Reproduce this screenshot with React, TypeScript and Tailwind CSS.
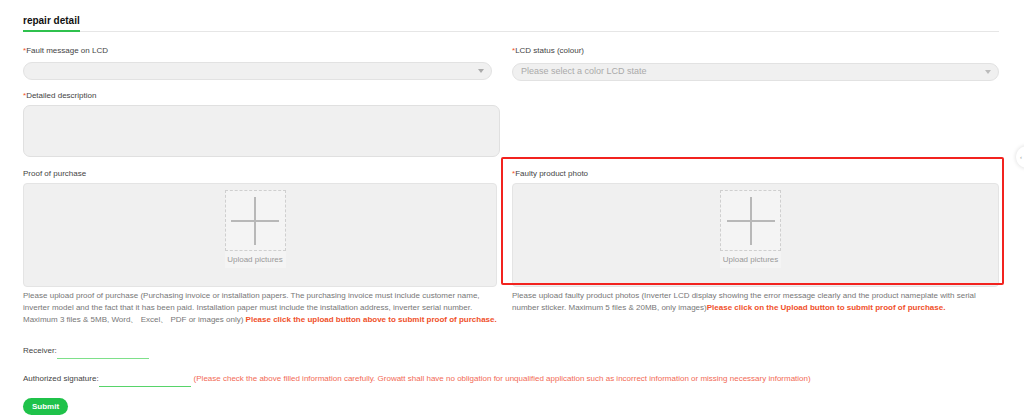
import React from 'react';

const Label: React.FC<{ text: string; required?: boolean }> = ({ text, required }) => (
  <div className="h-[12px] text-[8px] leading-[12px] text-[#444]">
    {required && <span className="text-[#f0502a]">*</span>}
    {text}
  </div>
);

const Upload: React.FC = () => (
  <div className="mt-[3px] h-[104px] rounded-[4px] border border-[#e4e4e4] bg-[#f0f0f0] flex justify-center pt-[6px] pr-[10px]">
    <div className="flex flex-col items-center">
      <div className="w-[61px] h-[61px] border border-dashed border-[#cfcfcf] bg-[#f4f4f4] flex items-center justify-center">
        <svg width="48" height="48" viewBox="0 0 48 48">
          <path d="M24 0v48M0 24h48" stroke="#b8b8b8" strokeWidth="2" />
        </svg>
      </div>
      <div className="w-[61px] text-center bg-[#f4f4f4] text-[8px] leading-[17px] text-[#999]">Upload pictures</div>
    </div>
  </div>
);

const App: React.FC = () => {
  return (
    <div
      className="relative w-[1024px] h-[417px] overflow-hidden bg-white"
      style={{ fontFamily: '"Liberation Sans", Arial, sans-serif' }}
    >
      <div className="pl-[23px] pr-[25px]">
        {/* Tabs */}
        <div className="pt-[14px] flex border-b border-[#e6e6e6]">
          <div className="border-b-2 border-[#2fc14d] pb-[2px] -mb-[1px] text-[10px] leading-[14px] font-bold text-[#111]">
            repair detail
          </div>
        </div>

        {/* Grid */}
        <div className="grid grid-cols-[477px_487px] gap-x-[12px] mt-[13px]">
          {/* row 1 */}
          <div>
            <Label text="Fault message on LCD" required />
            <div className="mt-[5px] h-[18px] rounded-full border border-[#e2e2e2] bg-[#f0f0f0] flex items-center justify-end pr-[7px] mr-[8px]">
              <span className="w-0 h-0 border-l-[3px] border-r-[3px] border-t-[4px] border-l-transparent border-r-transparent border-t-[#aaa]" />
            </div>
          </div>
          <div>
            <Label text="LCD status (colour)" required />
            <div className="mt-[6px] h-[18px] rounded-full border border-[#e2e2e2] bg-[#f0f0f0] flex items-center justify-between pl-[8px] pr-[7px]">
              <span className="text-[9px] text-[#aaa]">Please select a color LCD state</span>
              <span className="w-0 h-0 border-l-[3px] border-r-[3px] border-t-[4px] border-l-transparent border-r-transparent border-t-[#bbb]" />
            </div>
          </div>

          {/* row 2 */}
          <div className="mt-[9px]">
            <Label text="Detailed description" required />
            <div className="mt-[3px] h-[52px] rounded-[7px] border border-[#e0e0e0] bg-[#f0f0f0]" />
          </div>
          <div />

          {/* row 3 */}
          <div className="mt-[11px] pr-[3px]">
            <Label text="Proof of purchase" />
            <Upload />
          </div>
          <div className="relative mt-[11px]">
            <div className="absolute left-[-11px] right-[-5px] top-[-11px] bottom-[2px] border-2 border-[#f2231f] rounded-[2px] pointer-events-none" />
            <Label text="Faulty product photo" required />
            <Upload />
          </div>

          {/* row 4 */}
          <div className="mt-[3px] text-[8px] leading-[12px] text-[#777]">
            Please upload proof of purchase (Purchasing invoice or installation papers. The purchasing invoice must include customer name, inverter model and the fact that it has been paid. Installation paper must include the installation address, inverter serial number. Maximum 3 files &amp; 5MB, Word、 Excel、 PDF or images only){' '}
            <span className="font-bold text-[#f0502a]">Please click the upload button above to submit proof of purchase.</span>
          </div>
          <div className="mt-[3px] text-[8px] leading-[12px] text-[#777]">
            Please upload faulty product photos (Inverter LCD display showing the error message clearly and the product nameplate with serial number sticker. Maximum 5 files &amp; 20MB, only images)
            <span className="font-bold text-[#f0502a]">Please click on the Upload button to submit proof of purchase.</span>
          </div>
        </div>

        {/* signature */}
        <div className="mt-[19px] h-[12px] flex items-start text-[8px] leading-[12px] text-[#444]">
          <span>Receiver:</span>
          <span className="inline-block w-[92px] h-[14px] border-b border-[#7ee08a]" />
        </div>
        <div className="mt-[16px] h-[12px] flex items-start text-[8px] leading-[12px] text-[#444]">
          <span>Authorized signature:</span>
          <span className="inline-block w-[92px] h-[14px] border-b border-[#57d46a] mr-[3px]" />
          <span className="text-[#f26a55]">
            (Please check the above filled information carefully. Growatt shall have no obligation for unqualified application such as incorrect information or missing necessary information)
          </span>
        </div>
        <button className="mt-[13px] w-[45px] h-[17px] rounded-full bg-[#1fc24a] text-white text-[8px] font-bold flex items-center justify-center">
          Submit
        </button>
      </div>

      {/* right edge floating handle */}
      <div className="absolute left-[1016px] top-[146px] w-[22px] h-[22px] rounded-full bg-white shadow-[0_0_4px_rgba(0,0,0,0.15)] flex items-center pl-[4px]">
        <span className="text-[6px] text-[#999]">‹</span>
      </div>
    </div>
  );
};

export default App;
